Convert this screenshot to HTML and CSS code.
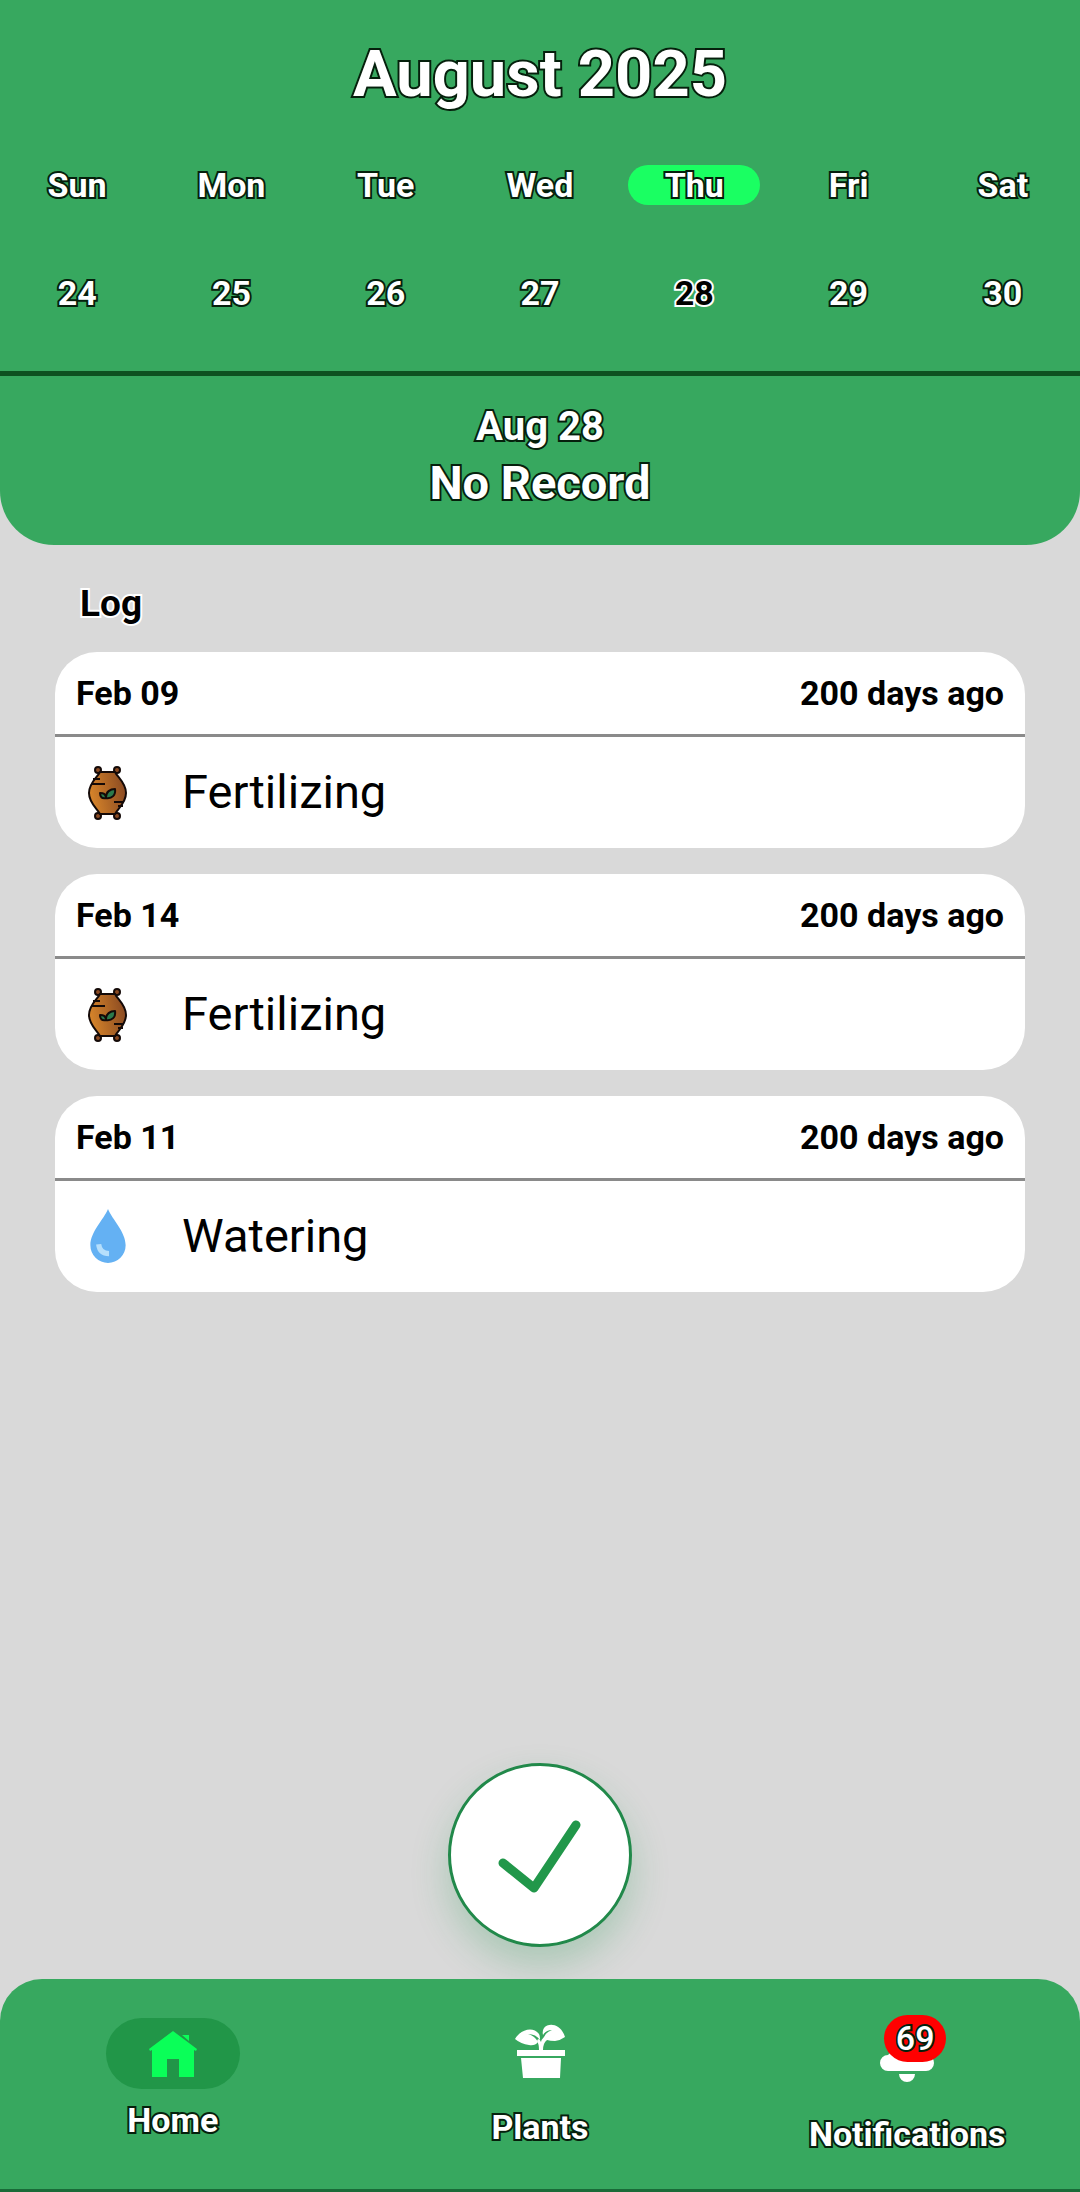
FILE: index.html
```html
<!DOCTYPE html>
<html lang="en">
<head>
<meta charset="utf-8">
<meta name="viewport" content="width=device-width, initial-scale=1">
<title>Plant care log</title>
<link rel="stylesheet" href="styles.css">
</head>
<body>
<svg class="symbols" width="0" height="0" aria-hidden="true">
  <defs>
    <linearGradient id="sack-fill" x1="0" y1="0.6" x2="1" y2="0.4">
      <stop offset="0" stop-color="#d9862a"/>
      <stop offset="1" stop-color="#8a4a22"/>
    </linearGradient>
    <symbol id="icon-sack" viewBox="0 0 42 56">
      <g fill="#8a4a22" stroke="#140a08" stroke-width="2">
        <circle cx="11" cy="6" r="3"/>
        <circle cx="30" cy="6" r="3"/>
        <circle cx="11" cy="52" r="3"/>
        <circle cx="30" cy="52" r="3"/>
      </g>
      <path d="M13 8C10 14 2 19 2 29s8 15 11 21h15c3-6 11-11 11-21S31 14 28 8z" fill="url(#sack-fill)" stroke="#140a08" stroke-width="2" stroke-linejoin="round"/>
      <path d="M6 15h7M4 20h14M27 38h10M31 42h5" fill="none" stroke="#140a08" stroke-width="2"/>
      <path d="M19 34c-4 1-6-1-6-5 4 0 5 1 6 4 0-5 4-8 9-8 1 6-3 10-9 9z" fill="#2c7a4b" stroke="#140a08" stroke-width="2" stroke-linejoin="round"/>
    </symbol>
    <symbol id="icon-drop" viewBox="0 0 36 54">
      <path d="M18 1c4 10 17 22 17 35a17 17 0 0 1-34 0C1 23 14 11 18 1z" fill="#64b1f3"/>
      <path d="M9 35q1 9 10 9" fill="none" stroke="#b5dffc" stroke-width="5"/>
    </symbol>
  </defs>
</svg>

<header class="top">
  <h1 class="month outlined">August 2025</h1>
  <table class="week outlined">
    <thead>
      <tr>
        <th><span class="day">Sun</span></th>
        <th><span class="day">Mon</span></th>
        <th><span class="day">Tue</span></th>
        <th><span class="day">Wed</span></th>
        <th><span class="day today">Thu</span></th>
        <th><span class="day">Fri</span></th>
        <th><span class="day">Sat</span></th>
      </tr>
    </thead>
    <tbody>
      <tr>
        <td>24</td>
        <td>25</td>
        <td>26</td>
        <td>27</td>
        <td class="selected">28</td>
        <td>29</td>
        <td>30</td>
      </tr>
    </tbody>
  </table>
  <section class="summary outlined">
    <h2 class="summary-date">Aug 28</h2>
    <p class="summary-text">No Record</p>
  </section>
</header>

<main class="content">
  <h2 class="log-title">Log</h2>
  <article class="card">
    <header class="card-head"><span>Feb 09</span><span>200 days ago</span></header>
    <div class="card-body"><svg class="task-icon" aria-hidden="true"><use href="#icon-sack"/></svg><span>Fertilizing</span></div>
  </article>
  <article class="card">
    <header class="card-head"><span>Feb 14</span><span>200 days ago</span></header>
    <div class="card-body"><svg class="task-icon" aria-hidden="true"><use href="#icon-sack"/></svg><span>Fertilizing</span></div>
  </article>
  <article class="card">
    <header class="card-head"><span>Feb 11</span><span>200 days ago</span></header>
    <div class="card-body"><svg class="task-icon" aria-hidden="true"><use href="#icon-drop"/></svg><span>Watering</span></div>
  </article>
  <button class="confirm" type="button" aria-label="Mark as done">
    <svg viewBox="0 0 84 76" aria-hidden="true"><path d="M5 46l31 25 42-63" fill="none" stroke="#21974a" stroke-width="9" stroke-linecap="round" stroke-linejoin="round"/></svg>
  </button>
</main>

<nav class="tabs outlined">
  <a class="tab" href="#home" aria-current="page">
    <span class="tab-icon active">
      <svg class="home" viewBox="0 0 50 48" aria-hidden="true"><path d="M25 1l24 18-1 2-2-1v27H31V29H19v18H4V20l-2 1-1-2zM34 5h7v6z" fill="#0aff58"/></svg>
    </span>
    <span>Home</span>
  </a>
  <a class="tab" href="#plants">
    <span class="tab-icon medium">
      <svg class="plant" viewBox="0 0 50 56" fill="#fff" aria-hidden="true">
        <path d="M2 26h48v6H2zM6 34h40l-1 20H8z"/>
        <path d="M0 15C6 5 18 2 24 10c1 2 1 4 1 6q-4-6-12-6 7 2 10 8-3 4-9 3Q6 20 0 15z"/>
        <path d="M50 13C46 0 34-2 29 4q-2 3-1 7 3-5 9-5-6 2-8 7-3 3-3 5-1-3-3-3l-1 2q2 3 2 9h4q0-7 4-10 3 1 8 1 6-1 10-4z"/>
      </svg>
    </span>
    <span>Plants</span>
  </a>
  <a class="tab" href="#notifications">
    <span class="tab-icon tall">
      <svg class="bell" viewBox="0 0 54 66" fill="#fff" aria-hidden="true">
        <path d="M8 37c5-4 5-8 5-14C13 13 18 8 24 6a3 3 0 0 1 6 0c6 2 11 7 11 17 0 6 0 10 5 14a8 8 0 0 1 0 16H8a8 8 0 0 1 0-16zM19 56h16a8 8 0 0 1-16 0z"/>
      </svg>
      <span class="badge">69</span>
    </span>
    <span>Notifications</span>
  </a>
</nav>
</body>
</html>
```

FILE: styles.css
```css
* {
  box-sizing: border-box;
}

body {
  display: flex;
  flex-direction: column;
  min-height: 100vh;
  margin: 0;
  background: #d9d9d9;
  color: #000;
  font-family: Roboto, "Liberation Sans", sans-serif;
  font-size: 34px;
  font-weight: 700;
}

h1,
h2,
p {
  margin: 0;
}

.symbols {
  position: absolute;
}

.outlined {
  color: #fff;
  paint-order: stroke fill;
  -webkit-text-stroke: 4px #05200c;
}

.top {
  border-radius: 0 0 54px 54px;
  background: #37a85f;
  text-align: center;
}

.month {
  padding-top: 36px;
  font-size: 65px;
  line-height: 76px;
}

.week {
  width: 100%;
  margin-top: 53px;
  border-collapse: collapse;
  table-layout: fixed;
}

.week th,
.week td {
  padding: 0 11px;
}

.week td {
  height: 166px;
  padding-top: 10px;
}

.day {
  display: block;
  border-radius: 20px;
  line-height: 40px;
}

.today {
  background: #1aff62;
}

.week .selected {
  color: #000;
  -webkit-text-stroke-color: #fff;
}

.summary {
  padding: 25px 0 32px;
  border-top: 5px solid #0d5120;
}

.summary-date {
  font-size: 40px;
  line-height: 52px;
}

.summary-text {
  font-size: 47px;
  line-height: 60px;
}

.content {
  display: flex;
  flex: 1;
  flex-direction: column;
  gap: 26px;
  padding: 37px 55px 32px;
}

.log-title {
  padding-left: 25px;
  font-size: 37px;
  line-height: 44px;
  paint-order: stroke fill;
  -webkit-text-stroke: 4px #fff;
}

.card {
  border-radius: 42px;
  background: #fff;
}

.card-head {
  display: flex;
  justify-content: space-between;
  padding: 21px;
  border-bottom: 3px solid #8a8a8a;
  line-height: 40px;
}

.card-body {
  display: flex;
  align-items: center;
  gap: 53px;
  padding: 27px 32px 28px;
  font-size: 47px;
  font-weight: 400;
  line-height: 56px;
}

.task-icon {
  width: 42px;
  height: 56px;
}

.confirm {
  display: flex;
  align-items: center;
  justify-content: center;
  align-self: center;
  width: 184px;
  height: 184px;
  margin-top: auto;
  border: 3px solid #21894a;
  border-radius: 50%;
  background: #fff;
  box-shadow: 0 18px 36px rgb(33 151 74 / 25%);
}

.confirm svg {
  flex: none;
  width: 84px;
  height: 76px;
}

.tabs {
  display: grid;
  grid-template-columns: 32% 36% 32%;
  padding: 39px 0 35px;
  border-bottom: 3px solid #196b38;
  border-radius: 42px 42px 0 0;
  background: #37a85f;
}

.tab {
  display: flex;
  flex-direction: column;
  align-items: center;
  gap: 11px;
  color: inherit;
  line-height: 40px;
  text-decoration: none;
}

.tab-icon {
  display: flex;
  position: relative;
  justify-content: center;
}

.active {
  align-items: center;
  width: 134px;
  height: 71px;
  border-radius: 36px;
  background: #219648;
}

.medium {
  height: 78px;
  padding-top: 6px;
}

.tall {
  height: 85px;
}

.home {
  width: 50px;
  height: 48px;
}

.plant {
  width: 50px;
  height: 56px;
}

.bell {
  width: 54px;
  height: 66px;
}

.badge {
  position: absolute;
  top: -3px;
  left: 4px;
  width: 62px;
  border-radius: 24px;
  background: #f00;
  font-weight: 500;
  line-height: 47px;
  text-align: center;
}
```
